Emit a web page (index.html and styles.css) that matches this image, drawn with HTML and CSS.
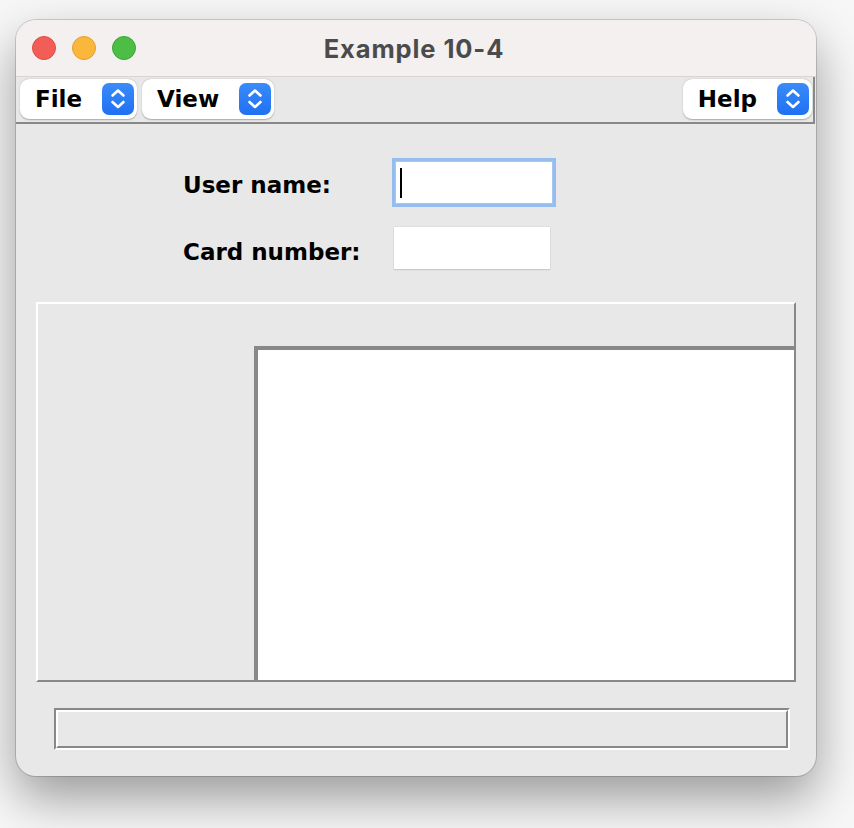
FILE: index.html
```html
<!DOCTYPE html>
<html>
<head>
<meta charset="utf-8">
<title>Example 10-4</title>
<link rel="stylesheet" href="styles.css">
</head>
<body>
<div class="window">
  <div class="titlebar">
    <div class="lights">
      <span class="light red"></span>
      <span class="light yellow"></span>
      <span class="light green"></span>
    </div>
    <div class="title">Example 10-4</div>
    <div class="spacer"></div>
  </div>
  <div class="menubar">
    <div class="menu">
      <span class="menu-label">File</span>
      <span class="stepper"><svg width="32" height="32" viewBox="0 0 32 32"><path d="M10.5 12.5 L16 7.5 L21.5 12.5 M10.5 19 L16 24 L21.5 19" fill="none" stroke="#fff" stroke-width="2.6" stroke-linecap="round" stroke-linejoin="round"/></svg></span>
    </div>
    <div class="menu">
      <span class="menu-label">View</span>
      <span class="stepper"><svg width="32" height="32" viewBox="0 0 32 32"><path d="M10.5 12.5 L16 7.5 L21.5 12.5 M10.5 19 L16 24 L21.5 19" fill="none" stroke="#fff" stroke-width="2.6" stroke-linecap="round" stroke-linejoin="round"/></svg></span>
    </div>
    <div class="menu-fill"></div>
    <div class="menu">
      <span class="menu-label">Help</span>
      <span class="stepper"><svg width="32" height="32" viewBox="0 0 32 32"><path d="M10.5 12.5 L16 7.5 L21.5 12.5 M10.5 19 L16 24 L21.5 19" fill="none" stroke="#fff" stroke-width="2.6" stroke-linecap="round" stroke-linejoin="round"/></svg></span>
    </div>
  </div>
  <div class="body">
    <div class="form">
      <label class="label">User name:</label>
      <div class="field focused"><span class="caret"></span></div>
      <label class="label second">Card number:</label>
      <div class="field"></div>
    </div>
    <div class="panel">
      <div class="panel-corner"></div>
      <div class="panel-top"></div>
      <div class="panel-left"></div>
      <div class="textarea"></div>
    </div>
    <div class="status">
      <div class="status-inner"></div>
    </div>
  </div>
</div>
</body>
</html>
```
FILE: styles.css
```css
html, body {
  margin: 0;
  padding: 0;
}
body {
  width: 854px;
  height: 828px;
  background: #f7f7f7;
  overflow: hidden;
  font-family: "DejaVu Sans", Verdana, sans-serif;
}
.window {
  margin: 20px 0 0 16px;
  width: 800px;
  height: 756px;
  border-radius: 20px;
  overflow: hidden;
  background: #e8e8e8;
  box-shadow: 0 0 0 1px rgba(0,0,0,0.16), 0 22px 50px rgba(0,0,0,0.38);
  display: flex;
  flex-direction: column;
}
.titlebar {
  height: 56px;
  flex: none;
  background: #f3f0ef;
  border-bottom: 1px solid #d7d4d3;
  display: grid;
  grid-template-columns: 1fr auto 1fr;
  align-items: center;
}
.lights {
  display: flex;
  gap: 16px;
  padding-left: 16px;
}
.light {
  width: 24px;
  height: 24px;
  border-radius: 50%;
  box-sizing: border-box;
}
.red { background: #f25e57; border: 1px solid #dd4d45; }
.yellow { background: #fbb63c; border: 1px solid #dfa030; }
.green { background: #4cbe45; border: 1px solid #3ba538; }
.title {
  font-family: Inter, "Open Sans", sans-serif;
  font-weight: 700;
  font-size: 25.5px;
  letter-spacing: 0.9px;
  color: #4b4b4b;
  padding-right: 4px;
}
.menubar {
  flex: none;
  box-sizing: border-box;
  display: flex;
  align-items: flex-start;
  padding: 2px 1px 0 4px;
  gap: 5px;
  margin-right: 1px;
  border-right: 2px solid #888;
  border-bottom: 2px solid #888;
  height: 47px;
}
.menu-fill { flex: 1; }
.menu {
  height: 40px;
  background: #fff;
  border-radius: 9px;
  box-shadow: 0 0.5px 1.5px rgba(0,0,0,0.28);
  display: flex;
  align-items: center;
  padding: 0 3px 0 15px;
  gap: 20px;
}
.menu-label {
  font-weight: bold;
  font-size: 23px;
  color: #000;
}
.stepper {
  width: 32px;
  height: 32px;
  border-radius: 7px;
  background: linear-gradient(#3a8cf9, #1f70f3);
  display: block;
}
.stepper svg { display: block; }
.body {
  flex: 1;
  display: flex;
  flex-direction: column;
}
.form {
  display: grid;
  grid-template-columns: 211px 160px;
  row-gap: 24px;
  margin: 38px 0 0 167px;
  align-items: center;
}
.label {
  font-weight: bold;
  font-size: 23px;
  color: #000;
  padding-top: 4px;
}
.label.second {
  padding-top: 8px;
}
.field {
  width: 156px;
  height: 42px;
  background: #fff;
  box-sizing: border-box;
  box-shadow: 0 0 0 0.5px #d6d6d6, 0 1px 1px rgba(0,0,0,0.18);
}
.field.focused {
  height: 41px;
  margin-left: 2px;
  box-shadow: 0 0 0 1px #a9c7ee, 0 0 0 4px #95bdf0;
  padding: 6px 0 0 4px;
}
.caret {
  display: block;
  width: 2px;
  height: 30px;
  background: #000;
}
.panel {
  margin: 33px 0 0 20px;
  width: 760px;
  height: 380px;
  box-sizing: border-box;
  border: 2px solid;
  border-color: #fff #888 #888 #fff;
  display: grid;
  grid-template-columns: 216px 1fr;
  grid-template-rows: 42px 1fr;
}
.textarea {
  background: #fff;
  border-top: 4px solid #888;
  border-left: 4px solid #888;
}
.status {
  margin: 26px 0 0 38px;
  width: 736px;
  height: 42px;
  box-sizing: border-box;
  border: 2px solid;
  border-color: #888 #fff #fff #888;
}
.status-inner {
  height: 100%;
  box-sizing: border-box;
  border: 2px solid;
  border-color: #fff #888 #888 #fff;
}
```
